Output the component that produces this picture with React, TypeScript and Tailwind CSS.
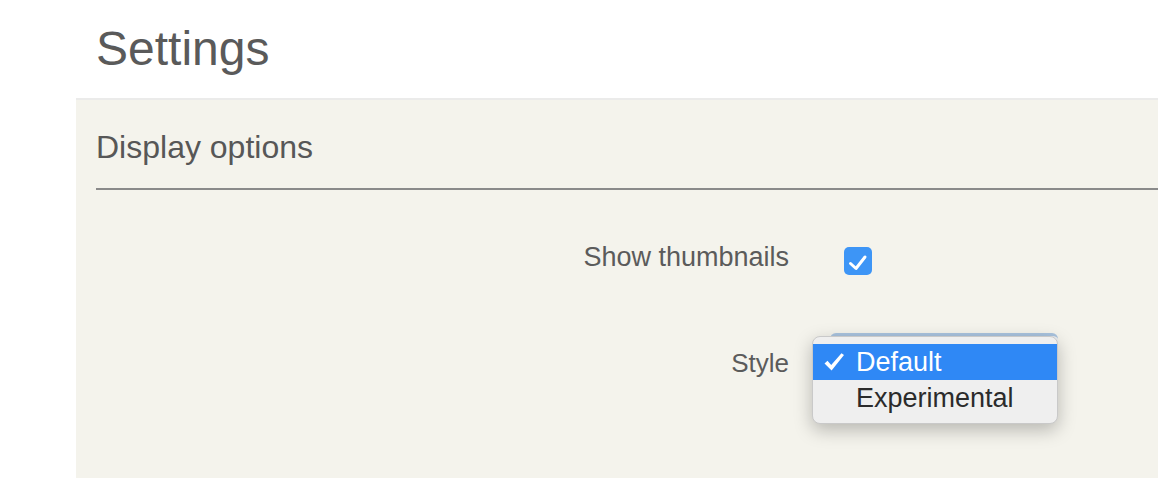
const font = { fontFamily: '"Liberation Sans", Arial, sans-serif' };

function MenuCheck() {
  return (
    <svg width="22" height="20" viewBox="0 0 22 20" className="shrink-0">
      <path d="M1.5 11.5 L4.5 8.8 L8.2 13 L18.5 1.2 L21 3 L8.6 18.5 Z" fill="white" />
    </svg>
  );
}

function BoxCheck() {
  return (
    <svg width="28" height="28" viewBox="0 0 28 28">
      <path d="M6.5 16.5 L12 21.5 L21 10" fill="none" stroke="white" strokeWidth="3" strokeLinecap="round" strokeLinejoin="round" />
    </svg>
  );
}

export default function App() {
  return (
    <div className="min-h-[478px] bg-white text-[#555]" style={font}>
      <h1 className="pl-[96px] pt-[25px] text-[48px] font-light leading-[48px] text-[#5a5a5a]">Settings</h1>

      <section className="ml-[76px] mt-[25px] h-[380px] border-t-2 border-[#ebebea] bg-[#f4f3ec] pl-[20px]">
        <h2 className="pt-[31px] text-[32px] leading-[32px] text-[#575757]">Display options</h2>
        <div className="mt-[25px] h-[2px] bg-[#8a8a8a]" />

        <div className="grid grid-cols-[693px_1fr] gap-x-[55px]">
          <label className="mt-[54px] text-right text-[27px] leading-[27px] text-[#5b5b5b]">Show thumbnails</label>
          <div className="mt-[57px]">
            <span className="block h-[28px] w-[28px] rounded-[5px] bg-[#3d95f6]">
              <BoxCheck />
            </span>
          </div>

          <label className="mt-[75px] text-right text-[26px] leading-[26px] text-[#5b5b5b]">Style</label>
          <div className="relative mt-[58px] h-[30px] w-[213px]">
            <div className="ml-[-14px] h-[30px] w-[228px] rounded-[6px] border-t-[3px] border-[#a9c3de] bg-[#eef0f2]" />
            <div className="absolute left-[-32px] top-[3px] w-[246px] rounded-[8px] border border-[#c9c9c9] bg-[#efefef] py-[7px] shadow-[0_6px_18px_rgba(0,0,0,0.25)]">
              <div className="flex h-[36px] items-center bg-[#2f88f5] pl-[10px]">
                <MenuCheck />
                <span className="ml-[11px] text-[27px] leading-[27px] text-white">Default</span>
              </div>
              <div className="flex h-[36px] items-center pl-[43px]">
                <span className="text-[27px] leading-[27px] text-[#2b2b2b]">Experimental</span>
              </div>
            </div>
          </div>
        </div>
      </section>
    </div>
  );
}
